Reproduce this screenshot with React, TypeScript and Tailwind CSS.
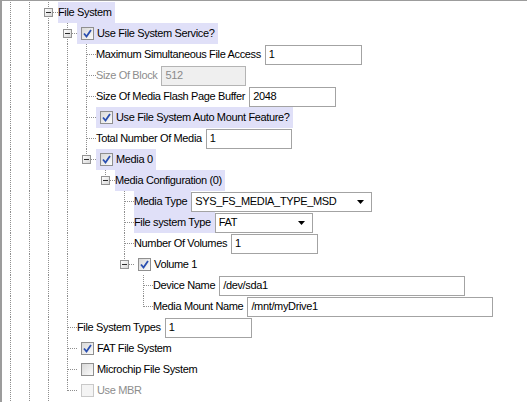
import React from "react";

type Field = {
  kind: "input" | "select";
  value: string;
  width: string;
  disabled?: boolean;
};

type TreeRow = {
  depth: number;
  label: string;
  last?: boolean;
  box?: boolean;
  check?: "on" | "off" | "disabled";
  hl?: boolean;
  disabled?: boolean;
  field?: Field;
};

const rows: TreeRow[] = [
  { depth: 2, label: "File System", box: true, hl: true },
  { depth: 3, label: "Use File System Service?", box: true, check: "on", hl: true },
  { depth: 4, label: "Maximum Simultaneous File Access", field: { kind: "input", value: "1", width: "w-[97px]" } },
  { depth: 4, label: "Size Of Block", disabled: true, field: { kind: "input", value: "512", width: "w-[85px]", disabled: true } },
  { depth: 4, label: "Size Of Media Flash Page Buffer", field: { kind: "input", value: "2048", width: "w-[87px]" } },
  { depth: 4, label: "Use File System Auto Mount Feature?", check: "on", hl: true },
  { depth: 4, label: "Total Number Of Media", field: { kind: "input", value: "1", width: "w-[86px]" } },
  { depth: 4, label: "Media 0", last: true, box: true, check: "on", hl: true },
  { depth: 5, label: "Media Configuration (0)", last: true, box: true, hl: true },
  { depth: 6, label: "Media Type", hl: true, field: { kind: "select", value: "SYS_FS_MEDIA_TYPE_MSD", width: "w-[181px]" } },
  { depth: 6, label: "File system Type", hl: true, field: { kind: "select", value: "FAT", width: "w-[98px]" } },
  { depth: 6, label: "Number Of Volumes", field: { kind: "input", value: "1", width: "w-[87px]" } },
  { depth: 6, label: "Volume 1", last: true, box: true, check: "on" },
  { depth: 7, label: "Device Name", field: { kind: "input", value: "/dev/sda1", width: "w-[246px]" } },
  { depth: 7, label: "Media Mount Name", last: true, field: { kind: "input", value: "/mnt/myDrive1", width: "w-[246px]" } },
  { depth: 3, label: "File System Types", field: { kind: "input", value: "1", width: "w-[87px]" } },
  { depth: 3, label: "FAT File System", check: "on" },
  { depth: 3, label: "Microchip File System", check: "off" },
  { depth: 3, label: "Use MBR", last: true, check: "disabled", disabled: true },
];

const Guide = ({ on }: { on: boolean }) => (
  <div className="w-[19px] shrink-0">
    {on && <div className="ml-[8px] h-full border-l border-dotted border-[#8e8e8e]" />}
  </div>
);

const Connector = ({ last, box }: { last?: boolean; box?: boolean }) => (
  <div className="relative w-[18px] shrink-0">
    <div className={`ml-[8px] border-l border-dotted border-[#8e8e8e] ${last ? "h-[11px]" : "h-full"}`} />
    <div className="absolute left-[9px] top-[10px] w-[9px] border-t border-dotted border-[#8e8e8e]" />
    {box && (
      <div className="absolute left-[4px] top-[6px] flex h-[9px] w-[9px] items-center justify-center border border-[#939393] bg-gradient-to-br from-white to-[#d8d8d8]">
        <div className="h-px w-[5px] bg-[#2b2b2b]" />
      </div>
    )}
  </div>
);

const CheckBox = ({ state }: { state: "on" | "off" | "disabled" }) => (
  <div
    className={`flex h-[13px] w-[13px] shrink-0 items-center justify-center border ${
      state === "disabled" ? "border-[#c9c9c9] bg-[#f4f4f4]" : "border-[#8f8f8f] bg-white"
    }`}
  >
    <div
      className={`flex h-[11px] w-[11px] items-center justify-center ${
        state === "disabled" ? "bg-[#f4f4f4]" : "bg-gradient-to-br from-[#d9d9d9] to-[#fbfbfb]"
      }`}
    >
      {state === "on" && (
        <svg width="9" height="9" viewBox="0 0 9 9">
          <path d="M1 4.5 L3.5 7.5 L8 1" fill="none" stroke="#2a4fb0" strokeWidth="1.8" />
        </svg>
      )}
    </div>
  </div>
);

const FieldBox = ({ field }: { field: Field }) => (
  <div
    className={`flex h-[20px] shrink-0 items-center border pl-[3px] ${field.width} ${
      field.disabled ? "border-[#b4b4b4] bg-[#efefef] text-[#8a8a8a]" : "border-[#a3a3a3] bg-white text-black"
    }`}
  >
    <span className="flex-1">{field.value}</span>
    {field.kind === "select" && (
      <svg width="7" height="4" viewBox="0 0 7 4" className="mr-[7px]">
        <path d="M0 0 H7 L3.5 4 Z" fill="#000" />
      </svg>
    )}
  </div>
);

const Row = ({ row }: { row: TreeRow }) => {
  const guides = Array.from({ length: row.depth }, (_, i) => i <= 3);
  const textColor = row.disabled ? "text-[#8d8d8d]" : "text-black";
  return (
    <div className="flex h-[21px] items-stretch">
      {guides.map((on, i) => (
        <Guide key={i} on={on} />
      ))}
      <Connector last={row.last} box={row.box} />
      {row.check ? (
        <div className={`flex items-center gap-[3px] pl-[4px] pr-[3px] ${row.hl ? "bg-[#e0e0f8]" : ""}`}>
          <CheckBox state={row.check} />
          <span className={textColor}>{row.label}</span>
        </div>
      ) : row.field ? (
        <div className="flex items-center">
          <div className={`flex h-full items-center pr-[4px] ${row.hl ? "bg-[#e0e0f8]" : ""}`}>
            <span className={textColor}>{row.label}</span>
          </div>
          <FieldBox field={row.field} />
        </div>
      ) : (
        <div className={`flex items-center pr-[3px] ${row.hl ? "bg-[#e0e0f8]" : ""}`}>
          <span className={textColor}>{row.label}</span>
        </div>
      )}
    </div>
  );
};

export default function App() {
  return (
    <div className="h-[402px] w-[527px] overflow-hidden bg-white">
      <div className="h-full border-l-2 border-t border-[#9c9c9c] pt-px font-['Liberation_Sans',Arial,sans-serif] text-[11px] leading-[21px] tracking-[-0.35px]">
        {rows.map((row, i) => (
          <Row key={i} row={row} />
        ))}
      </div>
    </div>
  );
}
